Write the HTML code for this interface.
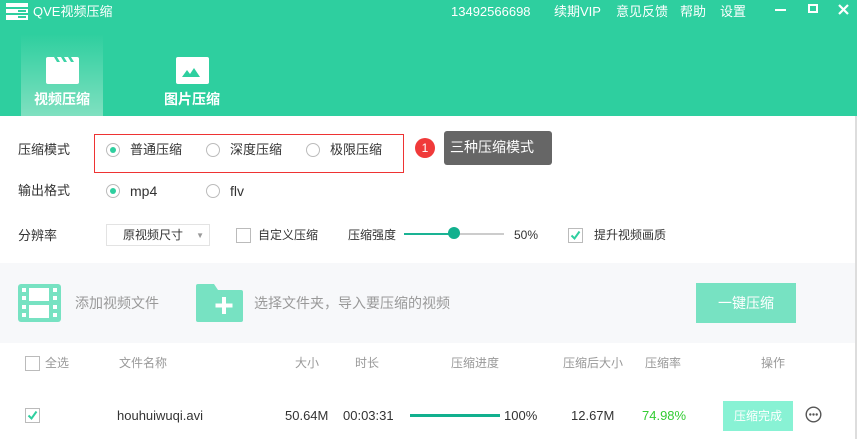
<!DOCTYPE html>
<html><head><meta charset="utf-8"><style>
*{margin:0;padding:0;box-sizing:border-box}
body{width:857px;height:439px;overflow:hidden;background:#fff;font-family:"Liberation Sans","Noto Sans CJK SC",sans-serif;font-size:13px;color:#333;position:relative}
.a{position:absolute;white-space:nowrap;line-height:16px}
.hdr{position:absolute;left:0;top:0;width:857px;height:116px;background:#2ecf9f}
.w{color:#fff}
.radio{position:absolute;width:14px;height:14px;border:1px solid #bbb;border-radius:50%;background:#fff}
.radio.on::after{content:"";position:absolute;left:3px;top:3px;width:6px;height:6px;border-radius:50%;background:#2ecf9f}
.cb{position:absolute;width:15px;height:15px;border:1px solid #bbb;background:#fff}
.g{color:#999}
</style></head><body>
<div class="hdr"></div>
<svg class="a" style="left:6px;top:3px" width="22" height="17"><rect x="0" y="0" width="22" height="4" fill="#fff"/><rect x="0" y="6" width="22" height="4" fill="#fff"/><rect x="0" y="12" width="22" height="5" fill="#fff"/><rect x="12" y="7" width="8" height="2" fill="#2ecf9f"/><rect x="12" y="13" width="8" height="2" fill="#2ecf9f"/></svg>
<div class="a w" style="left:33px;top:4px">QVE视频压缩</div>
<div class="a w" style="left:451px;top:4px">13492566698</div>
<div class="a w" style="left:554px;top:4px">续期VIP</div>
<div class="a w" style="left:616px;top:4px">意见反馈</div>
<div class="a w" style="left:680px;top:4px">帮助</div>
<div class="a w" style="left:720px;top:4px">设置</div>
<div class="a" style="left:775px;top:9px;width:11px;height:2px;background:#fff"></div>
<div class="a" style="left:808px;top:4px;width:10px;height:9px;border:2px solid #fff"></div>
<svg class="a" style="left:838px;top:4px" width="11" height="11"><path d="M1 1L10 10M10 1L1 10" stroke="#fff" stroke-width="2.2"/></svg>
<div class="a" style="left:21px;top:35px;width:82px;height:81px;background:linear-gradient(#2fcf9f,#7fe0c0)"></div>
<svg class="a" style="left:46px;top:57px" width="33" height="27"><rect x="0" y="0" width="33" height="27" rx="2" fill="#fff"/><path d="M8 0l3 5h3l-3-5zM15 0l3 5h3l-3-5zM22 0l3 5h3l-3-5z" fill="#3dd3a6"/></svg>
<div class="a w" style="left:34px;top:91px;font-size:14px;font-weight:bold">视频压缩</div>
<svg class="a" style="left:176px;top:57px" width="33" height="27"><rect x="0" y="0" width="33" height="27" rx="2" fill="#fff"/><path d="M6 20l5-7 3 4 4-6 6 9z" fill="#2ecf9f"/></svg>
<div class="a w" style="left:164px;top:91px;font-size:14px;font-weight:bold">图片压缩</div>
<div class="a" style="left:18px;top:142px">压缩模式</div>
<div class="a" style="left:94px;top:134px;width:310px;height:39px;border:1px solid #e33"></div>
<div class="radio on" style="left:106px;top:143px"></div><div class="a" style="left:130px;top:142px">普通压缩</div>
<div class="radio" style="left:206px;top:143px"></div><div class="a" style="left:230px;top:142px">深度压缩</div>
<div class="radio" style="left:306px;top:143px"></div><div class="a" style="left:330px;top:142px">极限压缩</div>
<div class="a" style="left:415px;top:138px;width:20px;height:20px;border-radius:50%;background:#f03a3a;color:#fff;font-size:12px;text-align:center;line-height:20px">1</div>
<div class="a" style="left:439px;top:143px;width:0;height:0;border:5px solid transparent;border-right-color:#666"></div>
<div class="a" style="left:444px;top:131px;width:108px;height:34px;background:#666;border-radius:3px;color:#fff;font-size:14px;line-height:33px;padding-left:6px">三种压缩模式</div>
<div class="a" style="left:18px;top:183px">输出格式</div>
<div class="radio on" style="left:106px;top:184px"></div><div class="a" style="left:130px;top:183px;font-size:14px">mp4</div>
<div class="radio" style="left:206px;top:184px"></div><div class="a" style="left:230px;top:183px;font-size:14px">flv</div>
<div class="a" style="left:18px;top:228px">分辨率</div>
<div class="a" style="left:106px;top:224px;width:104px;height:22px;border:1px solid #e3e3e3;font-size:12px;padding:2px 0 0 16px">原视频尺寸<span style="position:absolute;right:5px;top:3px;font-size:8px;color:#999">▼</span></div>
<div class="cb" style="left:236px;top:228px"></div><div class="a" style="left:258px;top:227px;font-size:12px">自定义压缩</div>
<div class="a" style="left:348px;top:227px;font-size:12px">压缩强度</div>
<div class="a" style="left:404px;top:233px;width:100px;height:2px;background:#ccc"></div>
<div class="a" style="left:404px;top:233px;width:50px;height:2px;background:#1ab394"></div>
<div class="a" style="left:448px;top:227px;width:12px;height:12px;border-radius:50%;background:#12b08e"></div>
<div class="a" style="left:514px;top:227px;font-size:12px">50%</div>
<div class="cb" style="left:568px;top:228px"><svg width="13" height="13" style="position:absolute;left:0;top:0"><path d="M2.5 6.5l3 3 5-7" stroke="#2ecf9f" stroke-width="2" fill="none"/></svg></div>
<div class="a" style="left:594px;top:227px;font-size:12px">提升视频画质</div>
<div class="a" style="left:0;top:263px;width:857px;height:80px;background:#f7f8fa"></div>
<svg class="a" style="left:18px;top:284px" width="43" height="38"><rect width="43" height="38" rx="3" fill="#77e2c2"/><rect x="11" y="4" width="20" height="13" fill="#fff"/><rect x="11" y="21" width="20" height="13" fill="#fff"/><g fill="#fff"><rect x="4" y="4" width="4" height="4"/><rect x="4" y="12" width="4" height="4"/><rect x="4" y="21" width="4" height="4"/><rect x="4" y="29" width="4" height="4"/><rect x="35" y="4" width="4" height="4"/><rect x="35" y="12" width="4" height="4"/><rect x="35" y="21" width="4" height="4"/><rect x="35" y="29" width="4" height="4"/></g></svg>
<div class="a g" style="left:75px;top:295px;font-size:14px">添加视频文件</div>
<svg class="a" style="left:196px;top:284px" width="47" height="38"><path d="M2 0h16l4 6h23a2 2 0 0 1 2 2v28a2 2 0 0 1-2 2H2a2 2 0 0 1-2-2V2a2 2 0 0 1 2-2z" fill="#77e2c2"/><path d="M28 13v17M19.5 21.5h17" stroke="#fff" stroke-width="4"/></svg>
<div class="a g" style="left:254px;top:295px;font-size:14px">选择文件夹，导入要压缩的视频</div>
<div class="a" style="left:696px;top:283px;width:100px;height:40px;background:#77e2c2;color:#fff;font-size:14px;text-align:center;line-height:40px">一键压缩</div>
<div class="cb" style="left:25px;top:356px"></div>
<div class="a g" style="left:45px;top:355px;font-size:12px">全选</div>
<div class="a g" style="left:119px;top:355px;font-size:12px">文件名称</div>
<div class="a g" style="left:295px;top:355px;font-size:12px">大小</div>
<div class="a g" style="left:355px;top:355px;font-size:12px">时长</div>
<div class="a g" style="left:451px;top:355px;font-size:12px">压缩进度</div>
<div class="a g" style="left:563px;top:355px;font-size:12px">压缩后大小</div>
<div class="a g" style="left:645px;top:355px;font-size:12px">压缩率</div>
<div class="a g" style="left:761px;top:355px;font-size:12px">操作</div>
<div class="cb" style="left:25px;top:408px"><svg width="13" height="13" style="position:absolute;left:0;top:0"><path d="M2.5 6.5l3 3 5-7" stroke="#2ecf9f" stroke-width="2" fill="none"/></svg></div>
<div class="a" style="left:117px;top:408px">houhuiwuqi.avi</div>
<div class="a" style="left:285px;top:408px">50.64M</div>
<div class="a" style="left:343px;top:408px">00:03:31</div>
<div class="a" style="left:410px;top:414px;width:90px;height:3px;background:#12b08e"></div>
<div class="a" style="left:504px;top:408px">100%</div>
<div class="a" style="left:571px;top:408px">12.67M</div>
<div class="a" style="left:642px;top:408px;color:#3c3">74.98%</div>
<div class="a" style="left:723px;top:401px;width:70px;height:30px;background:#88f2d4;color:#fff;font-size:12px;text-align:center;line-height:30px">压缩完成</div>
<svg class="a" style="left:805px;top:406px" width="17" height="17"><circle cx="8.5" cy="8.5" r="7.3" stroke="#555" stroke-width="1.4" fill="none"/><circle cx="5.3" cy="8.5" r="1.2" fill="#555"/><circle cx="8.5" cy="8.5" r="1.2" fill="#555"/><circle cx="11.7" cy="8.5" r="1.2" fill="#555"/></svg>
<div class="a" style="left:855px;top:116px;width:2px;height:323px;background:#ddd"></div>
</body></html>
